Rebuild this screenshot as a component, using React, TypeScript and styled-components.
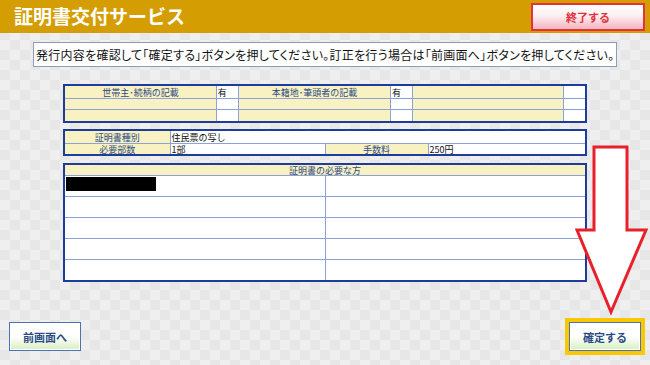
import React from "react";
import styled, { createGlobalStyle } from "styled-components";

const GlobalStyle = createGlobalStyle`
  html, body { margin: 0; padding: 0; }
  body {
    font-family: "Noto Sans CJK JP", "Noto Sans", sans-serif;
    background-color: #efefef;
    background-image: conic-gradient(#e7e7e7 25%, transparent 0 50%, #e7e7e7 0 75%, transparent 0);
    background-size: 20px 20px;
  }
`;

const Page = styled.div`
  position: relative;
  width: 650px;
  height: 365px;
  display: flex;
  flex-direction: column;
  overflow: hidden;
`;

const Header = styled.header`
  height: 33px;
  background: #d49e02;
  display: flex;
  align-items: center;
  justify-content: space-between;
  padding: 0 5px 0 14px;
  box-sizing: border-box;
`;

const Title = styled.h1`
  margin: 0;
  color: #fff;
  font-size: 19px;
  font-weight: 700;
  line-height: 1;
  margin-top: -2px;
`;

const EndButton = styled.button`
  width: 114px;
  height: 28px;
  margin-top: 1px;
  border: 2px solid #e8303a;
  background: linear-gradient(to bottom, #ffffff 0%, #fdeef1 45%, #f2b6c1 100%);
  color: #e0303a;
  font-family: inherit;
  font-weight: 700;
  font-size: 11px;
  padding: 0;
`;

const Message = styled.div`
  margin: 9px 0 0 33px;
  width: 584px;
  height: 25px;
  box-sizing: border-box;
  background: #fff;
  border: 1px solid #8c9cbc;
  display: flex;
  align-items: center;
  padding-left: 2px;
  font-size: 12px;
  color: #111;
  white-space: nowrap;
  font-feature-settings: "palt";
  letter-spacing: 0.27px;
`;

const Table = styled.table<{ $mt: number }>`
  margin: ${(p) => p.$mt}px 0 0 63px;
  width: 524px;
  border-collapse: collapse;
  table-layout: fixed;
  border: 2px solid #1d3c9c;
  background: #fff;
  font-size: 9px;
  line-height: 1;
`;

const Cell = styled.td<{ $label?: boolean; $h?: number; $center?: boolean }>`
  border: 1px solid #8ea2d6;
  height: ${(p) => p.$h ?? 11}px;
  padding: 0 1px;
  background: ${(p) => (p.$label ? "#f8f1c2" : "#fff")};
  color: ${(p) => (p.$label ? "#2c4a86" : "#111")};
  text-align: ${(p) => (p.$center ? "center" : "left")};
  vertical-align: middle;
  overflow: hidden;
  white-space: nowrap;
`;

const Redacted = styled.div`
  width: 90px;
  height: 14px;
  background: #000;
  margin: -4px 0 0 0;
`;

const Footer = styled.div`
  margin-top: auto;
  display: flex;
  align-items: center;
  justify-content: space-between;
  padding: 0 5px 10px 9px;
`;

const NavButton = styled.button`
  width: 72px;
  height: 29px;
  border: 1px solid #4c72b6;
  box-shadow: inset 0 0 0 1px #ffffff;
  background: linear-gradient(to bottom, #ffffff 0%, #ffffff 50%, #d6f0c0 100%);
  color: #2a4a84;
  font-family: inherit;
  font-weight: 700;
  font-size: 11px;
  padding: 0;
`;

const Highlight = styled.div`
  padding: 4px;
  background: #f8c800;
  display: flex;
`;

const ArrowSvg = styled.svg`
  position: absolute;
  left: 574px;
  top: 144px;
`;

const DownArrow = () => (
  <ArrowSvg width="76" height="174" viewBox="574 144 76 174">
    <polygon
      points="594,147 627,147 627,230 646,230 611,312 577,230 594,230"
      fill="#fff"
      stroke="#e8202a"
      strokeWidth="3"
      strokeLinejoin="miter"
    />
  </ArrowSvg>
);

export default function App() {
  return (
    <>
      <GlobalStyle />
      <Page>
        <Header>
          <Title>証明書交付サービス</Title>
          <EndButton>終了する</EndButton>
        </Header>
        <Message>
          発行内容を確認して「確定する」ボタンを押してください。訂正を行う場合は「前画面へ」ボタンを押してください。
        </Message>

        <Table $mt={17}>
          <colgroup>
            <col style={{ width: 152 }} />
            <col style={{ width: 22 }} />
            <col style={{ width: 152 }} />
            <col style={{ width: 22 }} />
            <col style={{ width: 151 }} />
            <col style={{ width: 22 }} />
          </colgroup>
          <tbody>
            <tr>
              <Cell $label $center $h={12}>世帯主･続柄の記載</Cell>
              <Cell $h={12}>有</Cell>
              <Cell $label $center $h={12}>本籍地･筆頭者の記載</Cell>
              <Cell $h={12}>有</Cell>
              <Cell $label $h={12} />
              <Cell $h={12} />
            </tr>
            <tr>
              <Cell $label $h={10} />
              <Cell $h={10} />
              <Cell $label $h={10} />
              <Cell $h={10} />
              <Cell $label $h={10} />
              <Cell $h={10} />
            </tr>
            <tr>
              <Cell $label $h={11} />
              <Cell $h={11} />
              <Cell $label $h={11} />
              <Cell $h={11} />
              <Cell $label $h={11} />
              <Cell $h={11} />
            </tr>
          </tbody>
        </Table>

        <Table $mt={6}>
          <colgroup>
            <col style={{ width: 106 }} />
            <col style={{ width: 155 }} />
            <col style={{ width: 103 }} />
            <col style={{ width: 158 }} />
          </colgroup>
          <tbody>
            <tr>
              <Cell $label $center $h={12}>証明書種別</Cell>
              <Cell colSpan={3} $h={12}>住民票の写し</Cell>
            </tr>
            <tr>
              <Cell $label $center $h={10}>必要部数</Cell>
              <Cell $h={10}>1部</Cell>
              <Cell $label $center $h={10}>手数料</Cell>
              <Cell $h={10}>250円</Cell>
            </tr>
          </tbody>
        </Table>

        <Table $mt={7}>
          <colgroup>
            <col style={{ width: 261 }} />
            <col style={{ width: 261 }} />
          </colgroup>
          <tbody>
            <tr>
              <Cell colSpan={2} $label $center $h={10}>証明書の必要な方</Cell>
            </tr>
            <tr>
              <Cell $h={20}>
                <Redacted />
              </Cell>
              <Cell $h={20} />
            </tr>
            {[0, 1, 2, 3].map((i) => (
              <tr key={i}>
                <Cell $h={20} />
                <Cell $h={20} />
              </tr>
            ))}
          </tbody>
        </Table>

        <Footer>
          <NavButton>前画面へ</NavButton>
          <Highlight>
            <NavButton>確定する</NavButton>
          </Highlight>
        </Footer>
        <DownArrow />
      </Page>
    </>
  );
}
